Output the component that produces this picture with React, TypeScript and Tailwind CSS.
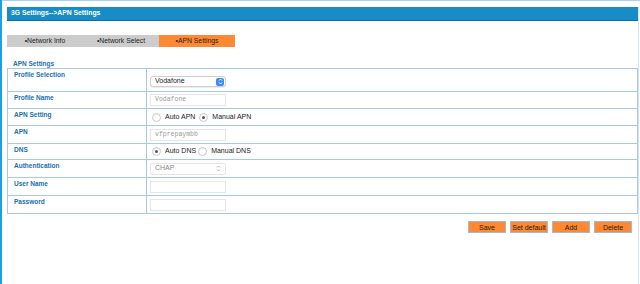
import React from "react";

const ROWS = [
  { label: "Profile Selection", kind: "select", h: "h-[23px]" },
  { label: "Profile Name", kind: "name", h: "h-[17px]" },
  { label: "APN Setting", kind: "apnRadio", h: "h-[17px]" },
  { label: "APN", kind: "apn", h: "h-[18px]" },
  { label: "DNS", kind: "dnsRadio", h: "h-[16px]" },
  { label: "Authentication", kind: "auth", h: "h-[18px]" },
  { label: "User Name", kind: "empty", h: "h-[18px]" },
  { label: "Password", kind: "empty", h: "h-[18px]" },
];

const Radio = ({ checked }: { checked?: boolean }) => (
  <span className="w-[9px] h-[9px] rounded-full border border-[#c8c8c8] bg-white flex items-center justify-center shadow-[inset_0_1px_1px_rgba(0,0,0,0.06)]">
    {checked && <span className="w-[3px] h-[3px] rounded-full bg-[#555]" />}
  </span>
);

const Field = ({ children, mono }: { children?: React.ReactNode; mono?: boolean }) => (
  <div
    className={`w-[76px] h-[12px] border border-[#e6e6e6] bg-white flex items-center px-[4px] text-[6.5px] text-[#999] ${
      mono ? "font-['Liberation_Mono',monospace]" : ""
    }`}
  >
    {children}
  </div>
);

const Control = ({ kind }: { kind: string }) => {
  switch (kind) {
    case "select":
      return (
        <div className="mt-[3px] w-[76px] h-[11px] border border-[#cfcfcf] rounded-[3px] bg-white flex items-center justify-between pl-[4px] pr-[1px] text-[7px] text-[#222] shadow-[0_1px_1px_rgba(0,0,0,0.08)]">
          <span>Vodafone</span>
          <span className="w-[8px] h-[8px] rounded-[2px] bg-[#3b8ef0] flex items-center justify-center">
            <svg width="5" height="7" viewBox="0 0 5 7">
              <path d="M1 2.6 L2.5 1 L4 2.6 M1 4.4 L2.5 6 L4 4.4" stroke="white" strokeWidth="0.9" fill="none" />
            </svg>
          </span>
        </div>
      );
    case "name":
      return <Field mono>Vodafone</Field>;
    case "apn":
      return <Field mono>vfprepaymbb</Field>;
    case "auth":
      return (
        <div className="w-[76px] h-[12px] border border-[#e6e6e6] rounded-[2px] bg-white flex items-center justify-between px-[4px] text-[7px] text-[#888]">
          <span>CHAP</span>
          <svg width="5" height="7" viewBox="0 0 5 7">
            <path d="M1 2.6 L2.5 1 L4 2.6 M1 4.4 L2.5 6 L4 4.4" stroke="#999" strokeWidth="0.7" fill="none" />
          </svg>
        </div>
      );
    case "apnRadio":
      return (
        <div className="flex items-center text-[7px] text-[#222] pl-[2px]">
          <Radio />
          <span className="ml-[4px] mr-[4px]">Auto APN</span>
          <Radio checked />
          <span className="ml-[4px]">Manual APN</span>
        </div>
      );
    case "dnsRadio":
      return (
        <div className="flex items-center text-[7px] text-[#222] pl-[2px]">
          <Radio checked />
          <span className="ml-[4px] mr-[2px]">Auto DNS</span>
          <Radio />
          <span className="ml-[4px]">Manual DNS</span>
        </div>
      );
    default:
      return <Field />;
  }
};

const App = () => {
  const tabs = ["•Network Info", "•Network Select", "•APN Settings"];
  const buttons = ["Save", "Set default", "Add", "Delete"];

  return (
    <div className="w-[640px] h-[284px] bg-white border-l-2 border-[#1ba1e2] font-['Liberation_Sans',Arial,sans-serif] overflow-hidden">
      <div className="h-[1px] bg-[#a8d4f0]" />
      <div className="ml-[5px] mr-[1px] mt-[6px] border-r border-[#d4e6f4] h-full">
        {/* TITLE BAR */}
        <div className="w-[631px] h-[14px] bg-[#178cc6] border-b border-[#0f6fa4] flex items-center pl-[4px] text-white text-[6.8px] font-bold">
          3G Settings--&gt;APN Settings
        </div>

        {/* TABS */}
        <div className="flex mt-[14px] h-[12px]">
          {tabs.map((t, i) => (
            <div
              key={t}
              className={`w-[76px] flex items-center justify-center text-[6.8px] text-[#222] ${
                i === 2 ? "bg-[#ff8833]" : "bg-[#cccccc]"
              }`}
            >
              {t}
            </div>
          ))}
        </div>

        {/* APN TABLE */}
        <div className="mt-[12px] pl-[6px] text-[6.5px] font-bold text-[#1a6fb0] h-[9px]">APN Settings</div>
        <table className="w-[631px] border-collapse border border-[#a9c8e8]">
          <tbody>
            {ROWS.map((r) => (
              <tr key={r.label} className={`${r.h} border-b border-[#a9c8e8]`}>
                <td className="w-[139px] align-top pl-[6px] pt-[3px] text-[6.5px] font-bold text-[#1a6fb0] border-r border-[#a9c8e8] leading-none">
                  {r.label}
                </td>
                <td className="align-middle pl-[3px]">
                  <Control kind={r.kind} />
                </td>
              </tr>
            ))}
          </tbody>
        </table>

        {/* ACTIONS */}
        <div className="flex justify-end gap-[4px] mt-[7px] pr-[6px]">
          {buttons.map((b) => (
            <button
              key={b}
              className="w-[38px] h-[12px] bg-[#ff8833] border border-[#a6b8cc] text-[7px] text-[#222] flex items-center justify-center leading-none whitespace-nowrap"
            >
              {b}
            </button>
          ))}
        </div>
      </div>
    </div>
  );
};

export default App;
